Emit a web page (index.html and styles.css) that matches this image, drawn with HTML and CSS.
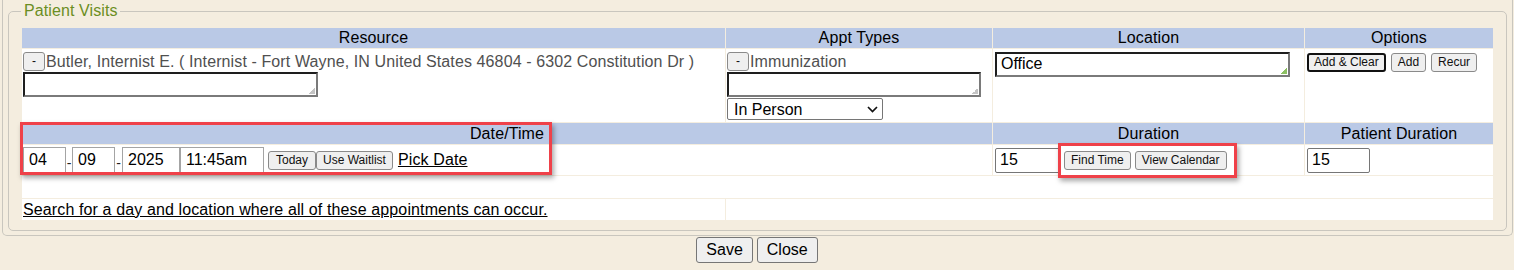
FILE: index.html
```html
<!DOCTYPE html>
<html lang="en">
<head>
    <meta charset="UTF-8">
    <meta name="viewport" content="width=device-width, initial-scale=1.0">
    <title>Patient Visits</title>
    <link rel="stylesheet" href="styles.css">
</head>
<body>
    <div class="panel">
        <fieldset class="visits">
            <legend>Patient Visits</legend>
            <div class="grid-wrap">
                <table class="grid">
                    <colgroup>
                        <col class="c-resource">
                        <col class="c-appt">
                        <col class="c-location">
                        <col class="c-options">
                    </colgroup>
                    <tr class="head head-top">
                        <th>Resource</th>
                        <th>Appt Types</th>
                        <th>Location</th>
                        <th>Options</th>
                    </tr>
                    <tr class="entry">
                        <td>
                            <div class="cell">
                                <div class="picked"><button class="btn btn-minus">-</button>Butler, Internist E. ( Internist - Fort Wayne, IN United States 46804 - 6302 Constitution Dr )</div>
                                <textarea class="lookup lookup-resource"></textarea>
                            </div>
                        </td>
                        <td>
                            <div class="cell">
                                <div class="picked"><button class="btn btn-minus">-</button>Immunization</div>
                                <textarea class="lookup lookup-appt"></textarea>
                                <span class="select-wrap">
                                    <select class="mode">
                                        <option>In Person</option>
                                        <option>Telehealth</option>
                                    </select>
                                    <svg class="chevron" width="11" height="7" viewBox="0 0 11 7"><path d="M1 1 L5.5 5.5 L10 1" fill="none" stroke="#111" stroke-width="1.7"/></svg>
                                </span>
                            </div>
                        </td>
                        <td>
                            <div class="cell cell-loc">
                                <textarea class="lookup lookup-location">Office</textarea>
                            </div>
                        </td>
                        <td>
                            <div class="cell cell-opts">
                                <button class="btn btn-default">Add &amp; Clear</button>
                                <button class="btn">Add</button>
                                <button class="btn">Recur</button>
                            </div>
                        </td>
                    </tr>
                    <tr class="head head-mid">
                        <th colspan="2">Date/Time</th>
                        <th>Duration</th>
                        <th>Patient Duration</th>
                    </tr>
                    <tr class="entry-time">
                        <td colspan="2">
                            <div class="when">
                                <input class="date date-mm" type="text" value="04">
                                <span class="dash">-</span>
                                <input class="date date-dd" type="text" value="09">
                                <span class="dash">-</span>
                                <input class="date date-yy" type="text" value="2025">
                                <input class="date date-time" type="text" value="11:45am">
                                <div class="pair">
                                    <button class="btn btn-today">Today</button><button class="btn">Use Waitlist</button>
                                </div>
                                <a href="#" class="link">Pick Date</a>
                            </div>
                        </td>
                        <td>
                            <div class="when when-dur">
                                <input class="num num-dur" type="text" value="15">
                                <button class="btn">Find Time</button>
                                <button class="btn">View Calendar</button>
                            </div>
                        </td>
                        <td>
                            <div class="when when-dur">
                                <input class="num num-patient" type="text" value="15">
                            </div>
                        </td>
                    </tr>
                    <tr class="spacer">
                        <td colspan="4"></td>
                    </tr>
                    <tr class="search">
                        <td><a href="#" class="link link-search">Search for a day and location where all of these appointments can occur.</a></td>
                        <td colspan="3"></td>
                    </tr>
                </table>
                <div class="mark mark-datetime"></div>
                <div class="mark mark-find"></div>
            </div>
        </fieldset>
    </div>

    <div class="actions">
        <button class="btn btn-big">Save</button>
        <button class="btn btn-big">Close</button>
    </div>
</body>
</html>
```

FILE: styles.css
```css
body {
    font-family: "Liberation Sans", Arial, sans-serif;
    font-size: 16px;
    background-color: #f4eddf;
    color: #000;
    margin: 0;
}

.panel {
    margin: 0 1px 0 2px;
    padding: 2px 5px 4px;
    border: 1px solid #c9c6be;
    border-top: none;
    border-radius: 0 0 5px 5px;
}

.visits {
    margin: 0;
    padding: 7px 12px 9px;
    border: 1px solid #c9c6be;
    border-radius: 5px;
}

.visits legend {
    color: #6b8e23;
    padding: 0 2px 0 3px;
    line-height: 18px;
    letter-spacing: 0.1px;
}

.grid-wrap {
    position: relative;
}

.grid {
    width: 1473px;
    table-layout: fixed;
    border-spacing: 1px;
}

.c-resource { width: 703px; }
.c-appt { width: 266px; }
.c-location { width: 311px; }
.c-options { width: 188px; }

.grid th,
.grid td {
    padding: 0;
}

.grid th {
    background-color: #bac9e6;
    font-weight: normal;
    text-align: center;
    line-height: 18px;
    letter-spacing: 0.1px;
}

.head-top th { height: 20px; }
.head-mid th { height: 21px; }

.grid td {
    background-color: #fff;
    vertical-align: top;
}

.entry td { height: 73px; }
.entry-time td { height: 30px; }
.spacer td { height: 22px; }
.search td { height: 21px; vertical-align: middle; }

.cell {
    padding: 2px 1px 0;
}

.cell-loc,
.cell-opts {
    padding: 3px 2px 0;
}

.cell-opts {
    display: flex;
    gap: 5px;
    padding-top: 4px;
}

.picked {
    display: flex;
    align-items: center;
    gap: 1px;
    height: 21px;
    color: #505050;
    white-space: nowrap;
    letter-spacing: 0.11px;
}

.btn {
    font-family: "Liberation Sans", Arial, sans-serif;
    font-size: 12px;
    height: 19px;
    padding: 0 6px;
    background-color: #efefef;
    color: #111;
    border: 1px solid #8a8a8a;
    border-radius: 3px;
    line-height: 15px;
}

.btn-minus {
    width: 22px;
    padding: 0;
}

.btn-today {
    padding: 0 7px;
}

.btn-default {
    border: 2px solid #111;
    padding: 0 5px;
}

.lookup {
    display: block;
    box-sizing: border-box;
    height: 25px;
    margin: 0;
    padding: 1px 4px;
    font-family: "Liberation Sans", Arial, sans-serif;
    font-size: 16px;
    line-height: 18px;
    resize: none;
    overflow: hidden;
    border-style: solid;
    border-width: 2px;
    border-color: #1e1e1e #7a7a7a #7a7a7a #1e1e1e;
    background: #fff linear-gradient(135deg, transparent 50%, #c4c4c4 50%) no-repeat right 1px bottom 1px / 6px 6px;
}

.lookup-resource { width: 295px; }
.lookup-appt { width: 254px; }
.lookup-location {
    width: 295px;
    background-image: linear-gradient(135deg, transparent 50%, #8cc063 50%);
}

.select-wrap {
    position: relative;
    display: block;
    width: 156px;
    margin-top: 1px;
}

.mode {
    display: block;
    box-sizing: border-box;
    width: 156px;
    height: 22px;
    padding: 0 0 0 6px;
    font-family: "Liberation Sans", Arial, sans-serif;
    font-size: 16px;
    background-color: #fff;
    color: #000;
    border: 1px solid #767676;
    border-radius: 2px;
    appearance: none;
}

.chevron {
    position: absolute;
    right: 5px;
    top: 8px;
    pointer-events: none;
}

.when {
    display: flex;
    align-items: center;
    height: 30px;
    padding-left: 1px;
}

.when-dur {
    padding-left: 2px;
    gap: 4px;
}

.date {
    box-sizing: border-box;
    height: 27px;
    margin: 0;
    padding: 0 5px;
    font-family: "Liberation Sans", Arial, sans-serif;
    font-size: 16px;
    color: #000;
    border: 1px solid #a4a4a4;
    border-radius: 0;
}

.date-mm,
.date-dd { width: 43px; }
.date-yy { width: 58px; }
.date-time { width: 84px; margin-right: 4px; }

.dash {
    font-size: 14px;
    width: 6px;
    text-align: center;
    padding-top: 5px;
    color: #222;
}

.date-dd + .dash { width: 7px; }

.pair {
    display: flex;
    margin-right: 5px;
}

.num {
    box-sizing: border-box;
    height: 25px;
    margin: 0;
    padding: 0 4px;
    font-family: "Liberation Sans", Arial, sans-serif;
    font-size: 16px;
    color: #000;
    border: 1px solid #767676;
    border-radius: 2px;
}

.num-dur { width: 65px; }
.num-patient { width: 63px; }

.link {
    color: #000;
    text-decoration: underline;
    letter-spacing: 0.12px;
}

.link-search {
    padding-left: 1px;
}

.mark {
    position: absolute;
    box-sizing: border-box;
    border: 3px solid #ef4149;
    box-shadow: 2px 3px 5px rgba(0, 0, 0, 0.35);
    pointer-events: none;
}

.mark-datetime {
    left: -1px;
    top: 95px;
    width: 532px;
    height: 53px;
}

.mark-find {
    left: 1037px;
    top: 116px;
    width: 179px;
    height: 35px;
}

.actions {
    display: flex;
    justify-content: center;
    gap: 4px;
    margin-top: 1px;
}

.btn-big {
    font-size: 16px;
    height: 26px;
    padding: 0 9px;
    color: #000;
    border-color: #767676;
    line-height: 20px;
}
```
